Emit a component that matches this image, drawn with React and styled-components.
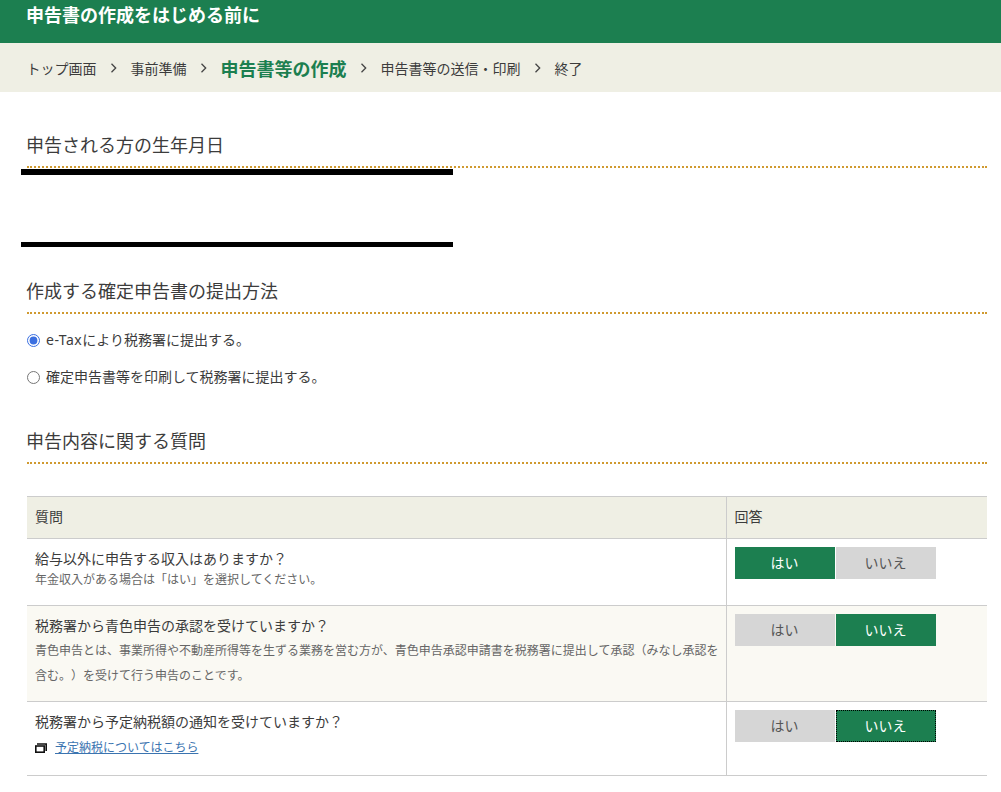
import styled, { createGlobalStyle } from 'styled-components';

const GlobalStyle = createGlobalStyle`
  html, body {
    margin: 0;
    padding: 0;
    background: #fff;
    color: #333;
    font-family: "Noto Sans", "Noto Sans CJK JP", sans-serif;
    font-size: 14px;
    text-spacing-trim: space-all;
  }
`;

const Page = styled.div`
  width: 1001px;
  height: 792px;
  overflow: hidden;
`;

const TitleBar = styled.header`
  height: 43px;
  background: #1c7f50;
  padding-left: 26px;
  box-sizing: border-box;
`;

const Title = styled.h1`
  margin: 0;
  font-size: 18px;
  line-height: 30px;
  font-weight: 700;
  color: #fff;
`;

const Breadcrumb = styled.ol`
  display: flex;
  align-items: center;
  height: 49px;
  margin: 0;
  padding: 1px 0 0 26.5px;
  box-sizing: border-box;
  list-style: none;
  background: #efefe4;
`;

const Crumb = styled.li`
  font-size: ${(p) => (p.$current ? '18px' : '14px')};
  font-weight: ${(p) => (p.$current ? 700 : 400)};
  color: ${(p) => (p.$current ? '#1c7f50' : '#3c3c3c')};
`;

const Chevron = styled.svg`
  width: 8px;
  height: 10px;
  margin: 0 13px;
  fill: none;
  stroke: #444;
  stroke-width: 1.3;
`;

const Main = styled.main`
  padding: 0 14px 0 27px;
`;

const Heading = styled.h2`
  margin: ${(p) => p.$top}px 0 0;
  height: 50px;
  padding-top: 8px;
  line-height: 38px;
  font-size: 18px;
  font-weight: 400;
  text-indent: -1px;
  color: #3c3c3c;
  border-bottom: 2px dotted #d09a30;
  box-sizing: border-box;
`;

const Redacted = styled.div`
  height: 78px;
  margin: 1px 0 0 -6px;
  width: 432px;
  box-sizing: border-box;
  border-top: 6px solid #000;
  border-bottom: 5px solid #000;
`;

const RadioList = styled.div`
  display: flex;
  flex-direction: column;
  gap: 17px;
  padding-top: 16px;
`;

const RadioRow = styled.label`
  display: flex;
  align-items: center;
  gap: 6px;
  height: 20px;
  font-size: 14px;
  line-height: 20px;
  color: #3c3c3c;
`;

const Latin = styled.span`
  letter-spacing: 0.5px;
`;

const Radio = styled.input`
  width: 13px;
  height: 13px;
  margin: 0;
  accent-color: #3b6fe0;
`;

const Table = styled.table`
  width: 960px;
  margin-top: 32px;
  border-collapse: collapse;
  table-layout: fixed;
  border-top: 1px solid #ccc;
`;

const HeadCell = styled.th`
  height: 42px;
  padding: 0 8px 4px;
  background: #efefe4;
  font-size: 14px;
  font-weight: 400;
  text-align: left;
  color: #3c3c3c;
  border-bottom: 1px solid #ccc;
  border-left: ${(p) => (p.$answer ? '1px solid #ccc' : 'none')};
  box-sizing: border-box;
`;

const Row = styled.tr`
  background: ${(p) => (p.$tinted ? '#faf9f3' : '#fff')};
`;

const Cell = styled.td`
  height: ${(p) => p.$h}px;
  padding: 8px ${(p) => (p.$answer ? 8 : 6)}px 8px 8px;
  vertical-align: top;
  box-sizing: border-box;
  border-bottom: 1px solid #ccc;
  border-left: ${(p) => (p.$answer ? '1px solid #ccc' : 'none')};
`;

const Question = styled.div`
  font-size: 14px;
  line-height: 24px;
  color: #3c3c3c;
`;

const Note = styled.div`
  font-size: 12px;
  line-height: ${(p) => p.$lh || 18}px;
  color: #666;
`;

const LinkRow = styled.div`
  display: flex;
  align-items: center;
  gap: 8px;
  margin-top: 2px;
  font-size: 12px;
  line-height: 24px;
`;

const WindowIcon = styled.svg`
  width: 12px;
  height: 10px;
`;

const MoreLink = styled.a`
  color: #3b74b0;
  text-decoration: underline;
`;

const Answers = styled.div`
  display: flex;
  gap: 1px;
`;

const Answer = styled.button`
  width: 100px;
  height: 32px;
  padding: 0 0 3px;
  border: ${(p) => (p.$focused ? '1px dotted #000' : 'none')};
  box-sizing: border-box;
  background: ${(p) => (p.$on ? '#1c7f50' : '#d6d6d6')};
  color: ${(p) => (p.$on ? '#fff' : '#555')};
  font-family: inherit;
  font-size: 14px;
`;

const YesNo = ({ yes, focused }) => (
  <Answers>
    <Answer $on={yes}>はい</Answer>
    <Answer $on={!yes} $focused={focused}>いいえ</Answer>
  </Answers>
);

const Sep = () => (
  <Chevron viewBox="0 0 8 10">
    <path d="M1.500 0.800l4.200 4.200-4.200 4.200" />
  </Chevron>
);

const App = () => (
  <Page>
    <GlobalStyle />
    <TitleBar>
      <Title>申告書の作成をはじめる前に</Title>
    </TitleBar>
    <Breadcrumb>
      <Crumb>トップ画面</Crumb>
      <Sep />
      <Crumb>事前準備</Crumb>
      <Sep />
      <Crumb $current>申告書等の作成</Crumb>
      <Sep />
      <Crumb>申告書等の送信・印刷</Crumb>
      <Sep />
      <Crumb>終了</Crumb>
    </Breadcrumb>
    <Main>
      <Heading $top={26}>申告される方の生年月日</Heading>
      <Redacted />
      <Heading $top={17}>作成する確定申告書の提出方法</Heading>
      <RadioList>
        <RadioRow>
          <Radio type="radio" name="method" defaultChecked />
          <span><Latin>e-Tax</Latin>により税務署に提出する。</span>
        </RadioRow>
        <RadioRow>
          <Radio type="radio" name="method" />
          確定申告書等を印刷して税務署に提出する。
        </RadioRow>
      </RadioList>
      <Heading $top={27}>申告内容に関する質問</Heading>
      <Table>
        <colgroup>
          <col width="699" />
          <col width="261" />
        </colgroup>
        <thead>
          <tr>
            <HeadCell>質問</HeadCell>
            <HeadCell $answer>回答</HeadCell>
          </tr>
        </thead>
        <tbody>
          <Row>
            <Cell $h={67}>
              <Question>給与以外に申告する収入はありますか？</Question>
              <Note>年金収入がある場合は「はい」を選択してください。</Note>
            </Cell>
            <Cell $h={67} $answer><YesNo yes /></Cell>
          </Row>
          <Row $tinted>
            <Cell $h={96}>
              <Question>税務署から青色申告の承認を受けていますか？</Question>
              <Note $lh={25}>
                青色申告とは、事業所得や不動産所得等を生ずる業務を営む方が、青色申告承認申請書を税務署に提出して承認（みなし承認を含む。）を受けて行う申告のことです。
              </Note>
            </Cell>
            <Cell $h={96} $answer><YesNo /></Cell>
          </Row>
          <Row>
            <Cell $h={74}>
              <Question>税務署から予定納税額の通知を受けていますか？</Question>
              <LinkRow>
                <WindowIcon viewBox="0 0 12 10">
                  <path d="M2 1h9.200v7" fill="none" stroke="#111" strokeWidth="1.600" />
                  <rect x="0.800" y="3" width="8.400" height="6.200" fill="#fff" stroke="#111" strokeWidth="1.600" />
                </WindowIcon>
                <MoreLink href="#">予定納税についてはこちら</MoreLink>
              </LinkRow>
            </Cell>
            <Cell $h={74} $answer><YesNo focused /></Cell>
          </Row>
        </tbody>
      </Table>
    </Main>
  </Page>
);

export default App;
